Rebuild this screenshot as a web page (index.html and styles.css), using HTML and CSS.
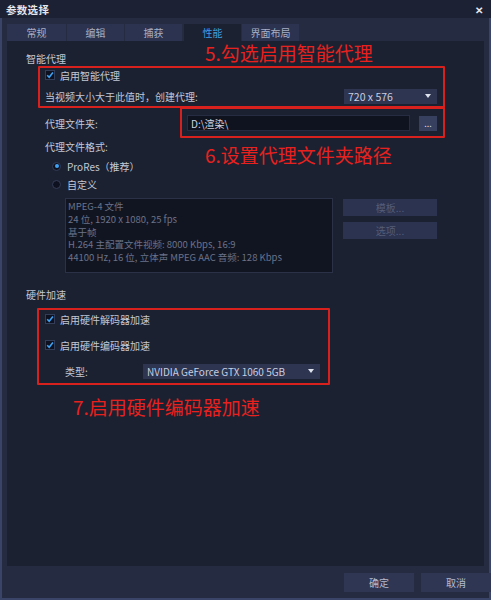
FILE: index.html
```html
<!DOCTYPE html>
<html lang="zh">
<head>
<meta charset="utf-8">
<link rel="stylesheet" href="styles.css">
</head>
<body>
<div class="window">
  <div class="titlebar">
    <span class="title">参数选择</span>
    <span class="close">✕</span>
  </div>
  <div class="tabs">
    <div class="tab">常规</div>
    <div class="tab">编辑</div>
    <div class="tab">捕获</div>
    <div class="tab active">性能</div>
    <div class="tab">界面布局</div>
  </div>
  <div class="panel">
    <div class="heading h1">智能代理</div>
    <div class="row cb-row r-cb1"><span class="cb"><svg viewBox="0 0 10 10"><path d="M2.2 5.2 L4.2 7.2 L7.9 2.6" /></svg></span><span>启用智能代理</span></div>
    <div class="row r-size">
      <span class="lbl">当视频大小大于此值时，创建代理:</span>
      <div class="select s-size"><span>720 x 576</span><span class="arrow"></span></div>
    </div>
    <div class="row r-folder">
      <span class="lbl">代理文件夹:</span>
      <div class="input">D:\渲染\</div>
      <div class="dots">...</div>
    </div>
    <div class="row r-fmt"><span class="lbl">代理文件格式:</span></div>
    <div class="row radio-row r-pro"><span class="radio on"></span><span>ProRes（推荐）</span></div>
    <div class="row radio-row r-cus"><span class="radio"></span><span>自定义</span></div>
    <div class="row r-info">
      <div class="info">
        <div>MPEG-4 文件</div>
        <div>24 位, 1920 x 1080, 25 fps</div>
        <div>基于帧</div>
        <div>H.264 主配置文件视频: 8000 Kbps, 16:9</div>
        <div>44100 Hz, 16 位, 立体声 MPEG AAC 音频: 128 Kbps</div>
      </div>
      <div class="side-btns">
        <div class="dbtn b1">模板...</div>
        <div class="dbtn b2">选项...</div>
      </div>
    </div>
    <div class="heading h2">硬件加速</div>
    <div class="row cb-row r-cb2"><span class="cb"><svg viewBox="0 0 10 10"><path d="M2.2 5.2 L4.2 7.2 L7.9 2.6" /></svg></span><span>启用硬件解码器加速</span></div>
    <div class="row cb-row r-cb3"><span class="cb"><svg viewBox="0 0 10 10"><path d="M2.2 5.2 L4.2 7.2 L7.9 2.6" /></svg></span><span>启用硬件编码器加速</span></div>
    <div class="row r-type">
      <span class="lbl">类型:</span>
      <div class="select s-type"><span>NVIDIA GeForce GTX 1060 5GB</span><span class="arrow"></span></div>
    </div>

    <div class="note n5">5.勾选启用智能代理</div>
    <div class="note n6">6.设置代理文件夹路径</div>
    <div class="note n7">7.启用硬件编码器加速</div>
    <div class="rbox rb1"></div>
    <div class="rbox rb2"></div>
    <div class="rbox rb3"></div>
  </div>
  <div class="footer">
    <div class="fbtn">确定</div>
    <div class="fbtn">取消</div>
  </div>
</div>
</body>
</html>
```
FILE: styles.css
```css
* { box-sizing: border-box; }
html, body { margin: 0; padding: 0; }
body {
  width: 491px;
  height: 600px;
  background: #262d43;
  font-family: "Noto Sans CJK SC", "Noto Sans", sans-serif;
  font-size: 10px;
  color: #c3c8d6;
  overflow: hidden;
}
.window {
  width: 491px;
  height: 600px;
  background: #252c42;
  border-left: 2px solid #3a4368;
  border-right: 2px solid #3a4368;
  border-bottom: 2px solid #3a4368;
  display: flex;
  flex-direction: column;
}
.titlebar {
  height: 18px;
  margin: 0 -2px;
  background: #1c2133;
  display: flex;
  align-items: center;
  justify-content: space-between;
  padding: 0 8px 0 6px;
  flex: none;
}
.title { color: #e4e6ee; font-size: 10.5px; font-weight: bold; letter-spacing: 0.3px; }
.close { color: #e8e8ee; font-size: 10px; font-weight: bold; }
.tabs {
  margin-top: 6px;
  padding-left: 5px;
  display: flex;
  gap: 1px;
  height: 17px;
  flex: none;
}
.tab {
  width: 57px;
  background: #2b3350;
  color: #a8afc5;
  display: flex;
  align-items: center;
  justify-content: center;
  font-size: 10px;
}
.tab:nth-child(1) { width: 59px; }
.tab.active { background: #1b2131; color: #3d9fe4; margin-left: 1px; }
.panel {
  position: relative;
  margin-left: 5px;
  width: 477px;
  height: 525px;
  background: #1b2131;
  padding: 9px 0 0 19px;
  flex: none;
}
.row {
  display: flex;
  align-items: center;
  height: 16px;
}
.heading { height: 16px; display: flex; align-items: center; color: #c3c8d6; }
.cb-row, .r-size, .r-folder, .r-fmt { padding-left: 19px; }
.cb-row { gap: 5px; }
.cb {
  width: 10px; height: 10px;
  background: #0e1220;
  border: 1px solid #343d58;
  display: inline-flex;
}
.cb svg { width: 10px; height: 10px; margin: -1px; }
.cb path { fill: none; stroke: #3fa3f5; stroke-width: 1.6; }
.r-cb1 { margin-top: 1px; }
.r-size { margin-top: 5px; justify-content: space-between; width: 411px; }
.select {
  height: 15px;
  background: #2d3550;
  color: #c9cee0;
  display: flex;
  align-items: center;
  justify-content: space-between;
  padding: 0 6px 0 4px;
  font-size: 10.5px;
}
.s-size { width: 93px; }
.arrow {
  width: 0; height: 0;
  border-left: 3px solid transparent;
  border-right: 3px solid transparent;
  border-top: 4px solid #dfe3ee;
}
.r-folder { margin-top: 11px; }
.r-folder .lbl { width: 142px; }
.input {
  width: 223px; height: 16px;
  background: #0f1320;
  border: 1px solid #262d42;
  color: #d0d4e0;
  display: flex; align-items: center;
  padding-left: 3px;
  font-size: 10px;
}
.dots {
  margin-left: 9px;
  width: 18px; height: 15px;
  background: #37405e;
  color: #d5d9e6;
  font-size: 9px;
  display: flex; align-items: flex-end; justify-content: center;
  padding-bottom: 3px;
  line-height: 1;
}
.r-fmt { margin-top: 7px; }
.radio-row { padding-left: 26px; gap: 6px; }
.radio {
  width: 9px; height: 9px; border-radius: 50%;
  background: #0e1220;
  border: 1px solid #343d58;
  position: relative;
}
.radio.on::after {
  content: "";
  position: absolute; left: 1.5px; top: 1.5px;
  width: 4px; height: 4px; border-radius: 50%;
  background: #3fa3f5;
}
.r-pro { margin-top: 4px; }
.r-cus { margin-top: 2px; }
.r-info { margin-top: 6px; height: 75px; align-items: flex-start; padding-left: 39px; }
.info {
  width: 268px; height: 75px;
  background: #111522;
  border: 1px solid #2b3247;
  color: #6b7287;
  font-size: 9.5px;
  line-height: 12.8px;
  padding: 1px 0 0 2px;
}
.side-btns { margin-left: 10px; display: flex; flex-direction: column; gap: 6px; padding-top: 1px; }
.dbtn {
  width: 94px; height: 17px;
  background: #2b3350;
  color: #555d77;
  display: flex; align-items: center; justify-content: center;
  font-size: 10px;
}
.h2 { margin-top: 13px; }
.r-cb2 { margin-top: 9px; }
.r-cb3 { margin-top: 10px; }
.r-type { margin-top: 10px; padding-left: 39px; }
.r-type .lbl { width: 78px; }
.s-type { width: 177px; font-size: 10px; }

.note {
  position: absolute;
  color: #e8211e;
  font-size: 19px;
  line-height: 20px;
  white-space: nowrap;
}
.n5 { left: 198px; top: 2px; }
.n6 { left: 198px; top: 104px; }
.n7 { left: 66px; top: 356px; }
.rbox { position: absolute; border: 2px solid #d8211c; border-radius: 1px; }
.rb1 { left: 31px; top: 25px; width: 407px; height: 42px; }
.rb2 { left: 173px; top: 66px; width: 265px; height: 31px; }
.rb3 { left: 30px; top: 267px; width: 293px; height: 77px; }

.footer {
  flex: 1;
  display: flex;
  justify-content: flex-end;
  align-items: flex-start;
  gap: 7px;
  padding: 7px 0 0 0;
  margin-right: -2px;
}
.fbtn {
  width: 70px; height: 19px;
  background: #2e3654;
  color: #b4bbd0;
  display: flex; align-items: center; justify-content: center;
  font-size: 10px;
}
```
